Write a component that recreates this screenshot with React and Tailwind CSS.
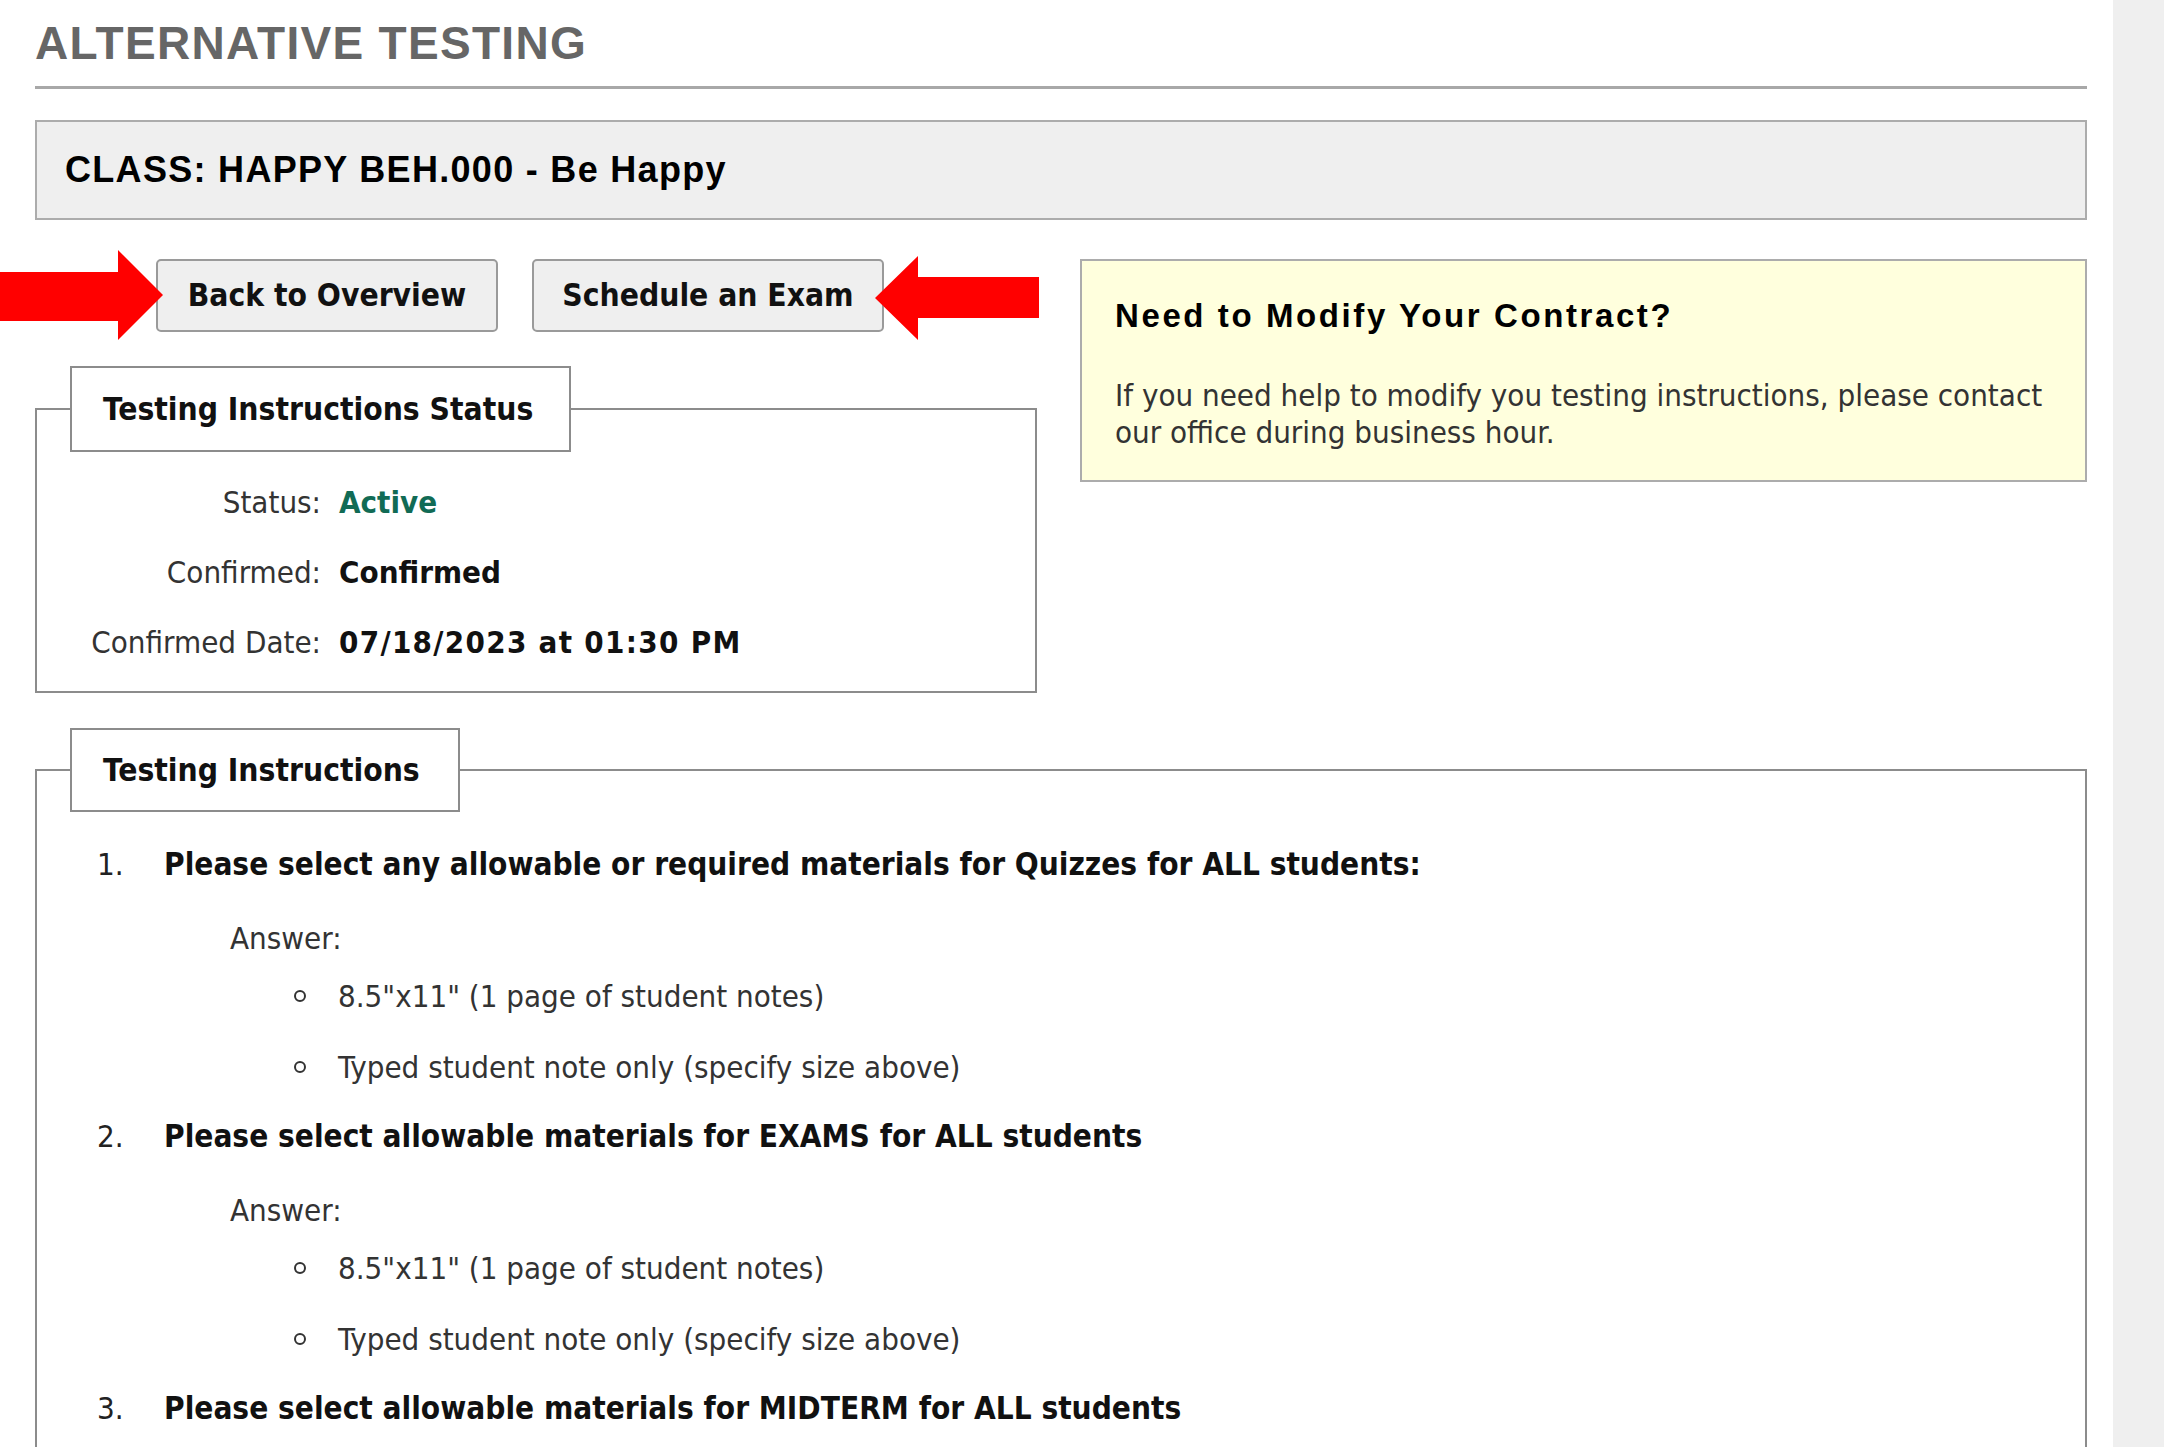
const body = "font-['DejaVu_Sans_Condensed','DejaVu_Sans',sans-serif]";
const head = "font-['Liberation_Sans',Arial,sans-serif]";

const answers = ['8.5"x11" (1 page of student notes)', 'Typed student note only (specify size above)'];

const instructions = [
  { q: 'Please select any allowable or required materials for Quizzes for ALL students:', a: answers },
  { q: 'Please select allowable materials for EXAMS for ALL students', a: answers },
  { q: 'Please select allowable materials for MIDTERM for ALL students', a: answers },
];

const statusRows = [
  { label: 'Status:', value: 'Active', tone: 'text-[#116b55]' },
  { label: 'Confirmed:', value: 'Confirmed', tone: 'text-[#111]' },
  { label: 'Confirmed Date:', value: '07/18/2023 at 01:30 PM', tone: 'text-[#111] tracking-[1.3px]' },
];

// red callout arrows next to the action buttons
const ArrowRight = ({ className }) => (
  <svg className={className} width="163" height="90" viewBox="0 0 163 90">
    <polygon points="0,22 118,22 118,0 163,45 118,90 118,71 0,71" fill="#ff0000" />
  </svg>
);

const ArrowLeft = ({ className }) => (
  <svg className={className} width="164" height="84" viewBox="0 0 164 84">
    <polygon points="164,21 43,21 43,0 0,42 43,84 43,62 164,62" fill="#ff0000" />
  </svg>
);

const Fieldset = ({ title, legendClass, children, className = '' }) => (
  <fieldset className={`border-2 border-[#8c8c8c] ${className}`}>
    <legend className={`ml-[33px] border-2 border-[#8c8c8c] bg-white pl-[31px] font-bold text-[31.5px] text-[#111] ${body} ${legendClass}`}>
      {title}
    </legend>
    {children}
  </fieldset>
);

export default function App() {
  return (
    <div className="flex min-h-screen bg-white">
      <main className="flex-1 pl-[35px] pr-[26px] pt-[20px]">
        <h1 className={`${head} text-[46px] leading-[46px] font-bold tracking-[1.3px] text-[#666]`}>
          ALTERNATIVE TESTING
        </h1>
        <div className="mt-[20px] h-[3px] bg-[#a8a8a8]" />

        <div className="mt-[31px] flex h-[100px] items-center border-2 border-[#acacac] bg-[#efefef] pl-[28px]">
          <h2 className={`${head} text-[36px] leading-[36px] font-bold tracking-[1.3px] text-black`}>
            CLASS: HAPPY BEH.000 - Be Happy
          </h2>
        </div>

        <div className="mt-[39px] flex items-start gap-[43px]">
          {/* left column: actions + status */}
          <div className="w-[1002px] shrink-0">
            <div className="relative flex h-[73px] gap-[34px] pl-[121px]">
              <ArrowRight className="absolute left-[-35px] top-[-9px]" />
              <button className={`${body} h-[73px] w-[342px] rounded-[5px] border-2 border-[#9a9a9a] bg-[#efefef] text-[31.5px] font-bold text-[#111]`}>
                Back to Overview
              </button>
              <button className={`${body} h-[73px] w-[352px] rounded-[5px] border-2 border-[#9a9a9a] bg-[#efefef] text-[31.5px] font-bold text-[#111]`}>
                Schedule an Exam
              </button>
              <ArrowLeft className="absolute left-[840px] top-[-3px]" />
            </div>

            <Fieldset title="Testing Instructions Status" legendClass="w-[501px] leading-[82px]" className="mt-[34px]">
              <div className={`${body} flex flex-col gap-[30px] pt-[30px] pb-[29px] text-[31px] leading-[40px]`}>
                {statusRows.map((row) => (
                  <div key={row.label} className="flex">
                    <span className="w-[284px] text-right text-[#333]">{row.label}</span>
                    <span className={`ml-[18px] font-bold ${row.tone}`}>{row.value}</span>
                  </div>
                ))}
              </div>
            </Fieldset>
          </div>

          {/* right column: contract notice */}
          <div className="h-[223px] flex-1 border-2 border-[#acacac] bg-[#ffffdd] pl-[33px] pr-[20px] pt-[38px]">
            <h3 className={`${head} text-[33px] leading-[33px] font-bold tracking-[2.6px] text-black`}>
              Need to Modify Your Contract?
            </h3>
            <p className={`${body} mt-[45px] text-[31px] leading-[37px] text-[#333]`}>
              If you need help to modify you testing instructions, please contact our office during business hour.
            </p>
          </div>
        </div>

        <Fieldset title="Testing Instructions" legendClass="w-[390px] leading-[80px]" className="mt-[35px]">
          <ol className={`${body} pl-[60px] pt-[32px] pb-[40px] text-[31px] leading-[40px]`}>
            {instructions.map((item, i) => (
              <li key={i} className={`flex ${i > 0 ? 'mt-[29px]' : ''}`}>
                <span className="w-[67px] shrink-0 text-[#222]">{i + 1}.</span>
                <div>
                  <p className="text-[31.3px] font-bold text-[#111]">{item.q}</p>
                  <p className="ml-[66px] mt-[34px] text-[#333]">Answer:</p>
                  <ul className="mt-[18px] flex flex-col gap-[31px]">
                    {item.a.map((ans) => (
                      <li key={ans} className="flex items-center pl-[130px] text-[#333]">
                        <span className="h-[12px] w-[12px] shrink-0 rounded-full border-2 border-[#333]" />
                        <span className="ml-[32px]">{ans}</span>
                      </li>
                    ))}
                  </ul>
                </div>
              </li>
            ))}
          </ol>
        </Fieldset>
      </main>
      <div className="w-[51px] shrink-0 bg-[#efefef]" />
    </div>
  );
}
